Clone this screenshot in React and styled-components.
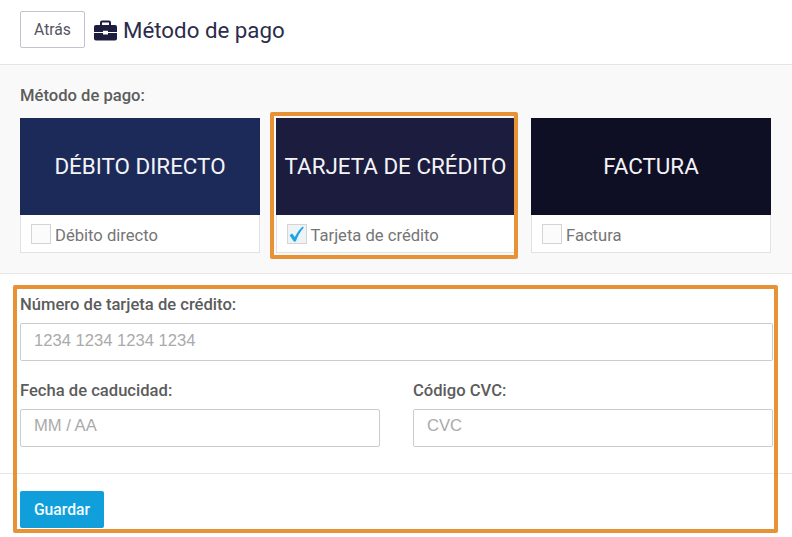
import React from 'react';
import styled, { createGlobalStyle } from 'styled-components';

const GlobalStyle = createGlobalStyle`
  html, body { margin: 0; padding: 0; background: #fff; }
  body { font-family: Roboto, "Liberation Sans", sans-serif; overflow: hidden; }
  * { box-sizing: border-box; }
`;

const Page = styled.div`
  width: 792px;
  height: 537px;
  position: relative;
  background: #fff;
`;

const Header = styled.header`
  height: 65px;
  padding: 11px 20px 0;
  display: flex;
  align-items: flex-start;
  gap: 9px;
  border-bottom: 1px solid #e4e4e4;
`;

const BackButton = styled.button`
  width: 65px;
  height: 37px;
  padding: 0;
  background: #fff;
  border: 1px solid #c3c3d0;
  border-radius: 2px;
  color: #55555f;
  font: 400 15.7px Roboto, sans-serif;
`;

const Title = styled.h1`
  margin: 0;
  height: 38px;
  display: flex;
  align-items: center;
  gap: 6px;
  color: #2c2c4c;
  font-size: 22.3px;
  font-weight: 400;

  svg { display: block; }
`;

const MethodSection = styled.section`
  height: 209px;
  padding: 22px 20px 0;
  background: #f9f9f9;
  border-bottom: 1px solid #e6e6e6;
`;

const Label = styled.label`
  display: block;
  color: #5c5c5c;
  font-size: 16.6px;
  font-weight: 500;
  line-height: 18px;
`;

const Cards = styled.div`
  margin-top: 13px;
  display: grid;
  grid-template-columns: repeat(3, 240px);
  column-gap: 15.5px;
`;

const Card = styled.div`
  position: relative;
  height: 135px;
  background: #fff;
  border: 1px solid #e2e2e2;
  border-top: 0;

  ${(props) => props.$marked && `
    &::after {
      content: "";
      position: absolute;
      inset: -6px -3.5px -7px -6.5px;
      border: 4px solid #e89236;
      border-radius: 2px;
    }
  `}
`;

const CardBanner = styled.div`
  height: 97px;
  margin: 0 -1px;
  padding-bottom: 2px;
  display: flex;
  align-items: center;
  justify-content: center;
  background: ${(props) => props.$color};
  color: #f4f4f6;
  font-size: 22.4px;
  font-weight: 400;
  white-space: nowrap;
`;

const CardOption = styled.div`
  height: 37px;
  padding-left: 10px;
  display: flex;
  align-items: center;
  gap: 4px;
  color: #757575;
  font-size: 16.6px;
`;

const OptionName = styled.span`
  padding-top: 3px;
`;

const CheckBox = styled.span`
  width: 20px;
  height: 20px;
  display: flex;
  align-items: center;
  justify-content: center;
  background: ${(props) => (props.$checked ? '#eef3f6' : '#fbfbfb')};
  border: 1px solid #d4d4d4;

  svg { display: block; overflow: visible; }
`;

const FormBox = styled.form`
  position: relative;
  height: 263px;
  margin: 0;

  &::after {
    content: "";
    position: absolute;
    inset: 11px 14px 4px 13px;
    border: 4px solid #e89236;
    border-radius: 2px;
    pointer-events: none;
  }
`;

const Fields = styled.div`
  height: 200px;
  padding: 22px 19px 0 20px;
  border-bottom: 1px solid #e6e6e6;
  display: flex;
  flex-direction: column;
  gap: 21px;
`;

const FieldRow = styled.div`
  display: grid;
  grid-template-columns: 360px 360px;
  column-gap: 33px;
`;

const Field = styled.div`
  display: flex;
  flex-direction: column;
  gap: 9px;
`;

const Input = styled.input`
  width: 100%;
  height: 38px;
  padding: 0 13px ${(props) => props.$lift}px;
  background: #fff;
  border: 1px solid #cccccc;
  border-radius: 2px;
  font: 400 16.6px "Liberation Sans", Arial, sans-serif;
  outline: none;

  &::placeholder { color: #aaaaaa; opacity: 1; }
`;

const Footer = styled.div`
  padding: 17px 20px 0;
`;

const SaveButton = styled.button`
  width: 84px;
  height: 37px;
  padding: 0;
  background: #119fdc;
  border: 0;
  border-radius: 2px;
  color: #f2fbff;
  font: 500 15.7px Roboto, sans-serif;
`;

const Briefcase = () => (
  <svg width="23" height="21" viewBox="0 0 23 21">
    <path
      fill="#1d1d40"
      fillRule="evenodd"
      d="M6 5 V2.5 C6 1.2 7 0.5 8 0.5 H15 C16 0.5 17 1.2 17 2.5 V5 H21 C22.2 5 23 5.8 23 7 V12 H14 V10.8 H9 V12 H0 V7 C0 5.8 0.8 5 2 5 Z M8 5 H15 V2.5 H8 Z"
    />
    <path fill="#1d1d40" d="M0 13 H9 V14.6 H14 V13 H23 V18.5 C23 19.7 22.2 20.5 21 20.5 H2 C0.8 20.5 0 19.7 0 18.5 Z" />
  </svg>
);

const Tick = () => (
  <svg width="18" height="18" viewBox="0 0 18 18">
    <path
      fill="#1ea5e6"
      d="M1.6 10.2 L4.2 8.4 L6.8 12 C8.8 8 11.4 4.2 14.8 1.4 L15.8 2.4 C12.2 6.6 9.6 11 7.8 16.6 L5.8 16.6 Z"
    />
  </svg>
);

const methods = [
  { id: 'debit', banner: 'DÉBITO DIRECTO', name: 'Débito directo', color: '#1c2a5a' },
  { id: 'card', banner: 'TARJETA DE CRÉDITO', name: 'Tarjeta de crédito', color: '#1c1c3e', active: true },
  { id: 'invoice', banner: 'FACTURA', name: 'Factura', color: '#0e0f25' },
];

export default function App() {
  return (
    <Page>
      <GlobalStyle />
      <Header>
        <BackButton type="button">Atrás</BackButton>
        <Title><Briefcase />Método de pago</Title>
      </Header>
      <MethodSection>
        <Label>Método de pago:</Label>
        <Cards>
          {methods.map((m) => (
            <Card key={m.id} $marked={m.active}>
              <CardBanner $color={m.color}>{m.banner}</CardBanner>
              <CardOption>
                <CheckBox $checked={m.active}>{m.active && <Tick />}</CheckBox>
                <OptionName>{m.name}</OptionName>
              </CardOption>
            </Card>
          ))}
        </Cards>
      </MethodSection>
      <FormBox>
        <Fields>
          <Field>
            <Label>Número de tarjeta de crédito:</Label>
            <Input placeholder="1234 1234 1234 1234" $lift={2} readOnly />
          </Field>
          <FieldRow>
            <Field>
              <Label>Fecha de caducidad:</Label>
              <Input placeholder="MM / AA" $lift={4} readOnly />
            </Field>
            <Field>
              <Label>Código CVC:</Label>
              <Input placeholder="CVC" $lift={4} readOnly />
            </Field>
          </FieldRow>
        </Fields>
        <Footer>
          <SaveButton type="button">Guardar</SaveButton>
        </Footer>
      </FormBox>
    </Page>
  );
}
